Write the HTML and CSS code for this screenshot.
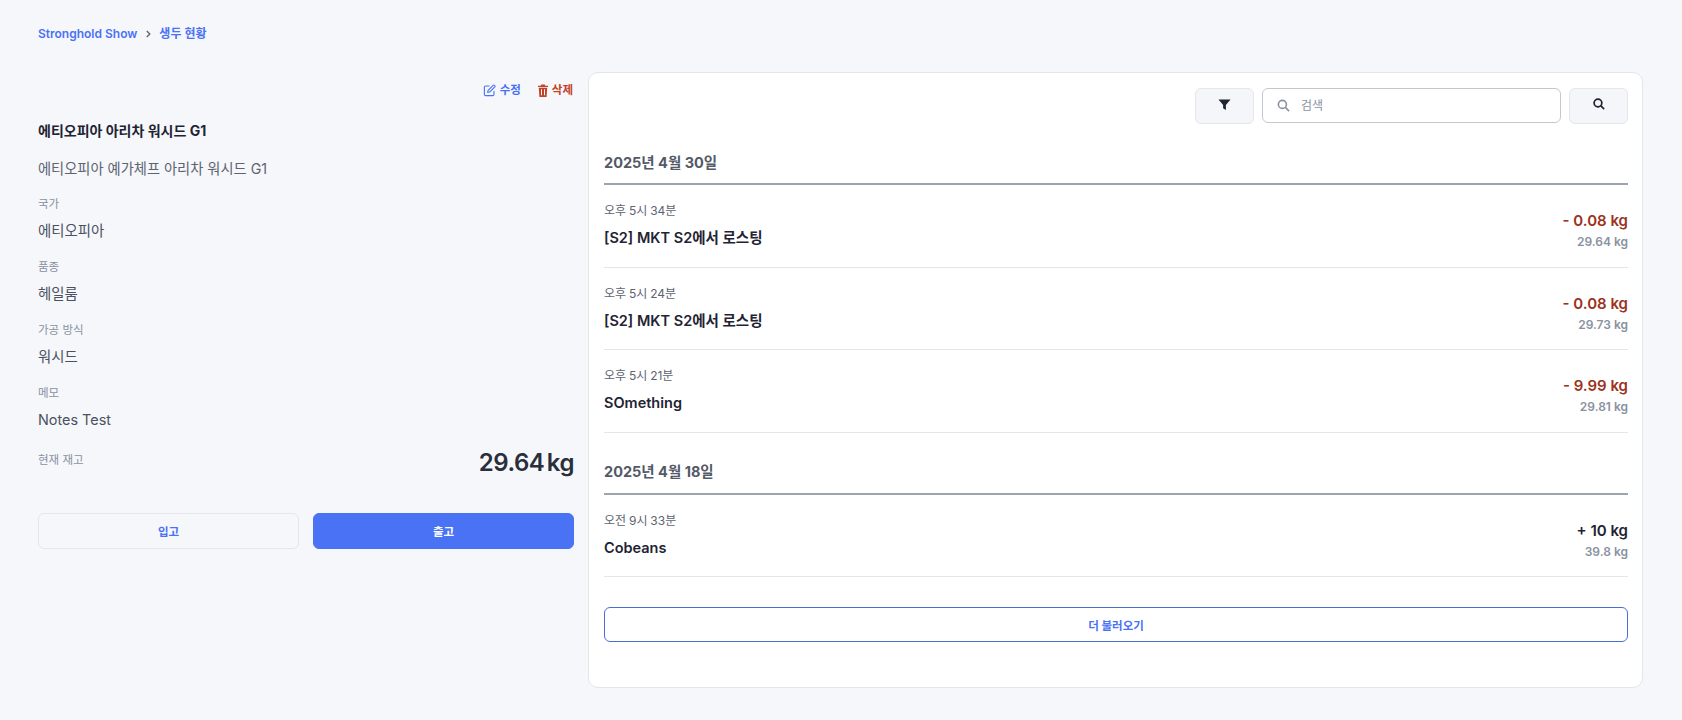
FILE: index.html
```html
<!DOCTYPE html>
<html lang="ko">
<head>
  <meta charset="UTF-8">
  <meta name="viewport" content="width=device-width, initial-scale=1" />
  <title>생두 현황 | Stronghold Show</title>
  <link rel="stylesheet" href="styles.css">
</head>
<body>
  <nav class="crumbs">
    <a href="#">Stronghold Show</a>
    <svg class="crumb-sep" viewBox="0 0 8 10" width="8" height="10"><path d="M2.8 2 5.800 5 2.800 8" fill="none" stroke="currentColor" stroke-width="1.300"/></svg>
    <a href="#">생두 현황</a>
  </nav>

  <main class="layout">
    <section class="detail">
      <div class="actions">
        <a href="#" class="action edit">
          <svg viewBox="0 0 14 14" width="13" height="13" fill="none" stroke="currentColor" stroke-width="1.200"><path d="M7 2.200H2.800A1.300 1.300 0 0 0 1.500 3.500v7.700a1.300 1.300 0 0 0 1.300 1.300h7.700a1.300 1.300 0 0 0 1.300-1.300V7.500"/><path d="M5.500 6.800 10.900 1.400a1 1 0 0 1 1.500 0l.3.300a1 1 0 0 1 0 1.500L7.300 8.600 5.100 9z"/></svg>
          수정
        </a>
        <a href="#" class="action delete">
          <svg viewBox="0 0 10 13" width="10" height="13" fill="currentColor"><path d="M3.300.500h3.400l.5 1.200H10v1.300H0V1.700h2.800zM.8 3.800h8.400L8.600 13H1.400zM3 5.300v6h1v-6zm3 0v6h1v-6z"/></svg>
          삭제
        </a>
      </div>

      <h2 class="bean-name">에티오피아 아리차 워시드 G1</h2>
      <p class="bean-full">에티오피아 예가체프 아리차 워시드 G1</p>

      <div class="field">
        <div class="field-label">국가</div>
        <div class="field-value">에티오피아</div>
      </div>
      <div class="field">
        <div class="field-label">품종</div>
        <div class="field-value">헤일룸</div>
      </div>
      <div class="field">
        <div class="field-label">가공 방식</div>
        <div class="field-value">워시드</div>
      </div>
      <div class="field">
        <div class="field-label">메모</div>
        <div class="field-value">Notes Test</div>
      </div>

      <div class="stock">
        <div class="field-label">현재 재고</div>
        <div class="stock-value">29.64 kg</div>
      </div>

      <div class="stock-btns">
        <button class="btn btn-in">입고</button>
        <button class="btn btn-out">출고</button>
      </div>
    </section>

    <section class="history">
      <div class="toolbar">
        <button class="tool-btn">
          <svg viewBox="0 0 14 14" width="13" height="13" fill="#1f2433"><path d="M.5 1.500h13L8.500 7.500V13L5.500 11V7.500z"/></svg>
        </button>
        <div class="search-box">
          <svg viewBox="0 0 14 14" width="13" height="13" fill="none" stroke="#8a91a0" stroke-width="1.700"><circle cx="5.800" cy="5.800" r="4.300"/><path d="M9 9l4 4"/></svg>
          <input type="text" placeholder="검색">
        </div>
        <button class="tool-btn">
          <svg viewBox="0 0 14 14" width="12" height="12" fill="none" stroke="#1f2433" stroke-width="2"><circle cx="5.800" cy="5.800" r="4.500"/><path d="M9 9l4 4"/></svg>
        </button>
      </div>

      <div class="day">
        <h3 class="day-title">2025년 4월 30일</h3>
        <div class="entry">
          <div>
            <div class="entry-time">오후 5시 34분</div>
            <div class="entry-name">[S2] MKT S2에서 로스팅</div>
          </div>
          <div class="entry-nums">
            <div class="amount minus">- 0.08 kg</div>
            <div class="balance">29.64 kg</div>
          </div>
        </div>
        <div class="entry">
          <div>
            <div class="entry-time">오후 5시 24분</div>
            <div class="entry-name">[S2] MKT S2에서 로스팅</div>
          </div>
          <div class="entry-nums">
            <div class="amount minus">- 0.08 kg</div>
            <div class="balance">29.73 kg</div>
          </div>
        </div>
        <div class="entry">
          <div>
            <div class="entry-time">오후 5시 21분</div>
            <div class="entry-name">SOmething</div>
          </div>
          <div class="entry-nums">
            <div class="amount minus">- 9.99 kg</div>
            <div class="balance">29.81 kg</div>
          </div>
        </div>
      </div>

      <div class="day">
        <h3 class="day-title">2025년 4월 18일</h3>
        <div class="entry">
          <div>
            <div class="entry-time">오전 9시 33분</div>
            <div class="entry-name">Cobeans</div>
          </div>
          <div class="entry-nums">
            <div class="amount">+ 10 kg</div>
            <div class="balance">39.8 kg</div>
          </div>
        </div>
      </div>

      <button class="more-btn">더 불러오기</button>
    </section>
  </main>
</body>
</html>
```

FILE: styles.css
```css
:root {
  --bg-color: #f5f7fb;
  --text-color: #1f2433;
  --muted: #8a91a0;
  --primary: #4a72f5;
  --danger: #c2412a;
  --line: #e4e6eb;
}

* {
  box-sizing: border-box;
}

body {
  margin: 0;
  padding: 0 39px 33px 38px;
  background-color: var(--bg-color);
  color: var(--text-color);
  font-family: 'Inter', 'Noto Sans CJK KR', sans-serif;
}

a {
  text-decoration: none;
}

h2, h3, p {
  margin: 0;
}

.crumbs {
  display: flex;
  align-items: center;
  gap: 5px;
  padding-top: 25px;
  height: 43px;
  font-size: 12px;
  line-height: 18px;
  font-weight: 600;
}

.crumbs a {
  color: var(--primary);
}

.crumb-sep {
  color: #5a6272;
  margin: 0 2px;
}

.layout {
  display: grid;
  grid-template-columns: 536px 1fr;
  gap: 14px;
  margin-top: 29px;
  align-items: start;
}

.actions {
  display: flex;
  justify-content: flex-end;
  gap: 17px;
  padding: 9px 1px 0 0;
  height: 27px;
}

.action {
  display: flex;
  align-items: center;
  gap: 4px;
  font-size: 11.500px;
  line-height: 18px;
  font-weight: 700;
}

.edit {
  color: var(--primary);
}

.delete {
  color: var(--danger);
}

.bean-name {
  margin-top: 22px;
  font-size: 14px;
  line-height: 20px;
  font-weight: 700;
}

.bean-full {
  margin-top: 18px;
  margin-bottom: -1px;
  font-size: 14.250px;
  line-height: 20px;
  color: #5d6371;
}

.field {
  margin-top: 18px;
}

.field-label {
  font-size: 11.500px;
  line-height: 16px;
  color: var(--muted);
}

.field-value {
  margin-top: 9px;
  font-size: 14.400px;
  line-height: 20px;
  color: #4b5160;
}

.stock {
  display: flex;
  justify-content: space-between;
  margin-top: 17px;
}

.stock .field-label {
  margin-top: 5px;
}

.stock-value {
  font-size: 24px;
  line-height: 32px;
  font-weight: 600;
  letter-spacing: -0.5px;
  word-spacing: -3px;
  color: #2a2e3b;
}

.stock-btns {
  display: grid;
  grid-template-columns: 1fr 1fr;
  gap: 14px;
  margin-top: 34px;
}

.btn {
  height: 36px;
  border-radius: 6px;
  border: 1px solid var(--line);
  font-family: inherit;
  font-size: 11.500px;
  font-weight: 700;
  cursor: pointer;
}

.btn-in {
  background: transparent;
  color: var(--primary);
}

.btn-out {
  background: var(--primary);
  border-color: var(--primary);
  color: white;
}

.history {
  padding: 15px 14px 45px 15px;
  background: white;
  border: 1px solid var(--line);
  border-radius: 10px;
}

.toolbar {
  display: flex;
  justify-content: flex-end;
  gap: 8px;
  height: 36px;
}

.tool-btn {
  display: flex;
  align-items: center;
  justify-content: center;
  width: 59px;
  height: 36px;
  padding: 0 0 4px;
  background: #f5f6f9;
  border: 1px solid var(--line);
  border-radius: 6px;
  cursor: pointer;
}

.search-box {
  display: flex;
  align-items: center;
  gap: 11px;
  width: 299px;
  height: 35px;
  padding: 0 14px;
  border: 1px solid #c4c7cf;
  border-radius: 6px;
}

.search-box input {
  flex: 1;
  min-width: 0;
  border: none;
  outline: none;
  padding: 0;
  font-family: inherit;
  font-size: 12px;
}

.search-box input::placeholder {
  color: var(--muted);
}

.day {
  margin-top: 28px;
}

.day-title {
  padding-bottom: 9px;
  border-bottom: 2px solid #9ea3b0;
  font-size: 14.500px;
  line-height: 22px;
  font-weight: 700;
  color: #535967;
}

.day + .day .day-title {
  padding-bottom: 10px;
}

.entry {
  display: flex;
  justify-content: space-between;
  height: 82.500px;
  padding-top: 18px;
  border-bottom: 1px solid var(--line);
}

.entry-time {
  font-size: 12px;
  line-height: 16px;
  word-spacing: -0.5px;
  color: #5d6371;
}

.entry-name {
  margin-top: 9px;
  font-size: 14.500px;
  line-height: 20px;
  font-weight: 600;
}

.entry-nums {
  padding-top: 8px;
  text-align: right;
}

.amount {
  font-size: 15px;
  line-height: 20px;
  font-weight: 600;
}

.minus {
  color: #9c3220;
}

.balance {
  margin-top: 3px;
  font-size: 12px;
  line-height: 16px;
  font-weight: 600;
  color: var(--muted);
}

.more-btn {
  display: block;
  width: 100%;
  height: 35px;
  margin-top: 30px;
  background: white;
  border: 1px solid #4a6fd0;
  border-radius: 6px;
  color: var(--primary);
  font-family: inherit;
  font-size: 11.500px;
  font-weight: 700;
  cursor: pointer;
}
```
